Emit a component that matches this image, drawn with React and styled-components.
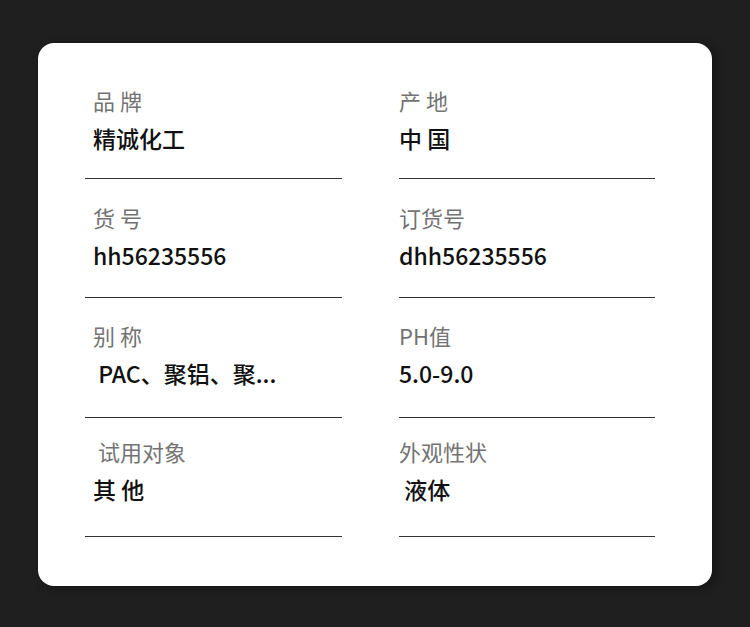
import React from "react";
import styled, { createGlobalStyle } from "styled-components";

const GlobalStyle = createGlobalStyle`
  html, body {
    margin: 0;
    padding: 0;
    background: #1f1f1f;
  }
  body {
    font-family: "Noto Sans CJK SC", "Noto Sans", sans-serif;
  }
`;

const Page = styled.div`
  width: 750px;
  height: 627px;
  padding: 43px 38px 41px 38px;
  box-sizing: border-box;
  background: #1f1f1f;
`;

const Card = styled.div`
  height: 543px;
  box-sizing: border-box;
  background: #fff;
  border-radius: 16px;
  box-shadow: 4px 2px 10px rgba(0, 0, 0, 0.35);
  padding: 16px 57px 0 47px;
  display: grid;
  grid-template-columns: 257px 256px;
  grid-auto-rows: 119.6px;
  column-gap: 57px;
  align-content: start;
`;

const Cell = styled.div`
  box-sizing: border-box;
  border-bottom: 1.5px solid #333;
  padding: ${(p) => p.$top}px 0 0 ${(p) => p.$indent}px;
`;

const Label = styled.div`
  font-size: 22px;
  line-height: 30px;
  color: #737373;
  font-weight: 400;
  white-space: pre;
`;

const Value = styled.div`
  margin-top: 8px;
  font-size: 23px;
  line-height: 30px;
  color: #111;
  font-weight: 500;
  white-space: pre;
`;

const rowTops = [25.5, 23, 21.5, 18];

const items = [
  { label: "品 牌", value: "精诚化工" },
  { label: "产 地", value: "中 国" },
  { label: "货 号", value: "hh56235556" },
  { label: "订货号", value: "dhh56235556" },
  { label: "别 称", value: " PAC、聚铝、聚..." },
  { label: "PH值", value: "5.0-9.0" },
  { label: " 试用对象", value: "其 他" },
  { label: "外观性状", value: " 液体" },
];

export default function App() {
  return (
    <>
      <GlobalStyle />
      <Page>
        <Card>
          {items.map((item, i) => (
            <Cell
              key={item.label}
              $top={rowTops[Math.floor(i / 2)]}
              $indent={i % 2 === 0 ? 8 : 0}
            >
              <Label>{item.label}</Label>
              <Value>{item.value}</Value>
            </Cell>
          ))}
        </Card>
      </Page>
    </>
  );
}
